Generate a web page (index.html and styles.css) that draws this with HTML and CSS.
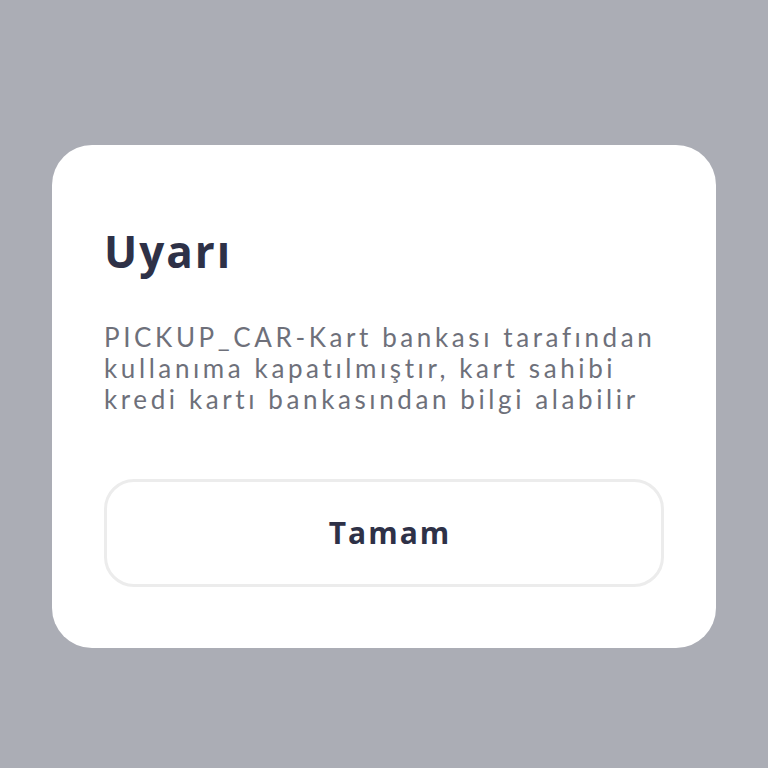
FILE: index.html
```html
<!DOCTYPE html>
<html lang="tr">
<head>
<meta charset="utf-8">
<link rel="stylesheet" href="styles.css">
</head>
<body>
<div class="screen">
  <div class="dialog">
    <h1 class="title">Uyarı</h1>
    <p class="message">PICKUP_CAR-Kart bankası tarafından<br>kullanıma kapatılmıştır, kart sahibi<br>kredi kartı bankasından bilgi alabilir</p>
    <button class="btn">Tamam</button>
  </div>
</div>
</body>
</html>
```
FILE: styles.css
```css
html, body {
  margin: 0;
  padding: 0;
}
body {
  background: #abadb5;
  font-family: "Open Sans", "Liberation Sans", sans-serif;
}
.screen {
  width: 768px;
  height: 768px;
  display: flex;
  align-items: flex-start;
  justify-content: flex-start;
  padding: 145px 0 0 52px;
  box-sizing: border-box;
}
.dialog {
  width: 664px;
  box-sizing: border-box;
  background: #ffffff;
  border-radius: 40px;
  padding: 76px 52px 61px;
  display: flex;
  flex-direction: column;
}
.title {
  margin: 0;
  font-size: 44px;
  line-height: 60px;
  font-weight: 700;
  letter-spacing: 2px;
  color: #2e3147;
}
.message {
  margin: 41px 0 0;
  font-family: "Lato", "Open Sans", sans-serif;
  font-size: 26px;
  line-height: 31.2px;
  letter-spacing: 3.6px;
  color: #6e707a;
  width: 560px;
  white-space: nowrap;
}
.btn {
  margin-top: 63px;
  height: 108px;
  width: 560px;
  background: #ffffff;
  border: 3px solid #ececec;
  border-radius: 30px;
  font-family: inherit;
  font-size: 30px;
  font-weight: 700;
  letter-spacing: 2px;
  color: #2e3147;
  padding: 0 0 0 12px;
}
```
